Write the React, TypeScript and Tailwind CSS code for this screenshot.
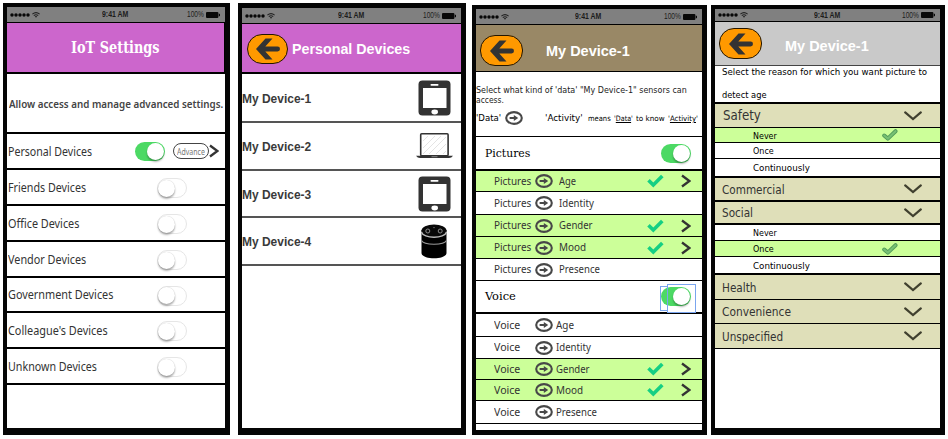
import { useLayoutEffect, useRef, useState } from 'react';
import type { ReactNode } from 'react';

const SANS = "font-['Noto_Sans',sans-serif]";
const ARIAL = "font-['Liberation_Sans',sans-serif]";
const DEJAVU = "font-['DejaVu_Sans_Condensed','DejaVu_Sans',sans-serif]";
const SERIF = "font-['DejaVu_Serif_Condensed','DejaVu_Serif',serif]";
const NARROW_SERIF = "font-['DejaVu_Serif',serif]";

/** A single line of text condensed or widened to a given width. */
function Fit({ w, className = '', children }: { w: number; className?: string; children: ReactNode }) {
  const ref = useRef<HTMLSpanElement>(null);
  const [scale, setScale] = useState(1);
  useLayoutEffect(() => {
    if (ref.current) setScale(w / ref.current.offsetWidth);
  }, [w]);
  return (
    <span className={`block shrink-0 ${className}`} style={{ width: w }}>
      <span ref={ref} className="inline-block origin-left whitespace-nowrap" style={{ transform: `scaleX(${scale})` }}>
        {children}
      </span>
    </span>
  );
}

function StatusBar({ className }: { className: string }) {
  return (
    <div className={`grid shrink-0 grid-cols-[1fr_auto_1fr] items-center border-b border-black bg-[#808080] pr-[5px] pl-[3px] text-[8.5px] leading-none text-[#1c1c1c] ${ARIAL} ${className}`}>
      <div className="flex items-center gap-[2px]">
        <svg width="20" height="4" viewBox="0 0 20 4" fill="#080808">
          <circle cx="2" cy="2" r="1.75" />
          <circle cx="6" cy="2" r="1.75" />
          <circle cx="10" cy="2" r="1.75" />
          <circle cx="14" cy="2" r="1.75" />
          <circle cx="18" cy="2" r="1.75" />
        </svg>
        <svg width="8" height="6" viewBox="0 0 8 6" fill="none" stroke="#222" strokeWidth="1.1">
          <path d="M.4 2.1Q4-.9 7.6 2.1M1.8 3.6Q4 1.8 6.2 3.6" />
          <path d="M2.8 4.3L4 5.8L5.2 4.3Q4 3.5 2.8 4.3Z" fill="#222" stroke="none" />
        </svg>
      </div>
      <Fit w={26} className="font-bold">9:41 AM</Fit>
      <div className="flex items-center justify-end gap-[2px]">
        <Fit w={17}>100%</Fit>
        <svg width="14" height="6" viewBox="0 0 14 6" fill="#080808">
          <rect width="12.4" height="6" rx="1" />
          <rect x="12.8" y="1.8" width="1.2" height="2.4" />
        </svg>
      </div>
    </div>
  );
}

function Toggle({ on }: { on?: boolean }) {
  return on ? (
    <div className="flex h-[19px] w-[30px] shrink-0 items-center justify-end rounded-full bg-[#4cd964]">
      <div className="mr-[1px] size-[17px] rounded-full bg-white shadow-[0_2px_2px_rgba(0,0,0,0.3)]" />
    </div>
  ) : (
    <div className="flex h-[20px] w-[30px] shrink-0 items-center rounded-full border border-[#e6e6e6] bg-white">
      <div className="size-[17px] rounded-full bg-white shadow-[0_2px_2px_rgba(0,0,0,0.3),0_0_1px_rgba(0,0,0,0.25)]" />
    </div>
  );
}

function BackButton({ className = '' }: { className?: string }) {
  return (
    <div className={`flex shrink-0 items-center justify-center rounded-[15px] border border-[#241600] bg-[#ff9900] ${className}`}>
      <svg width="26" height="22" viewBox="0 0 26 22" fill="#333">
        <path d="M10.500 .5H17.500L10.300 8.600H22.600A2.400 2.400 0 0 1 22.600 13.400H10.300L17.500 21.500H10.500L1 11Z" />
      </svg>
    </div>
  );
}

function ArrowRing() {
  return (
    <svg className="shrink-0" width="18" height="14" viewBox="0 0 18 14" fill="none" stroke="#484848">
      <ellipse cx="9" cy="7" rx="7.8" ry="5.9" strokeWidth="2.1" />
      <path d="M4.6 7H10.500" strokeWidth="2" />
      <path d="M8.800 4L13.200 7L8.800 10Z" fill="#484848" stroke="none" />
    </svg>
  );
}

function ChevronRight({ className = '' }: { className?: string }) {
  return (
    <svg className={`shrink-0 ${className}`} width="10" height="14" viewBox="0 0 10 14" fill="none" stroke="#333" strokeWidth="2.3">
      <path d="M1 1.5L8.4 7L1 12.5" />
    </svg>
  );
}

function ChevronDown() {
  return (
    <svg className="shrink-0" width="18" height="10" viewBox="0 0 18 10" fill="none" stroke="#40402f" strokeWidth="2.2" strokeLinecap="round">
      <path d="M1.2 1.4L9 8L16.8 1.4" />
    </svg>
  );
}

/* ---------- Settings ---------- */

const groups = [
  { name: 'Friends Devices', w: 78, h: 'h-[36px]' },
  { name: 'Office Devices', w: 71, h: 'h-[36px]' },
  { name: 'Vendor Devices', w: 78, h: 'h-[36px]' },
  { name: 'Government Devices', w: 105, h: 'h-[35px]' },
  { name: "Colleague's Devices", w: 100, h: 'h-[36px]' },
  { name: 'Unknown Devices', w: 89, h: 'h-[36px]' },
];

function SettingsPhone() {
  return (
    <section className="mt-[3px] flex h-[432px] w-[227px] shrink-0 flex-col border-t-4 border-r-5 border-b-[7px] border-l-4 border-[#050505] bg-white">
      <StatusBar className="h-4" />
      <header className={`flex h-[51px] shrink-0 items-center justify-center border-r border-b-2 border-black bg-[#cc66cc] pt-[2px] text-[16.5px] leading-none font-bold text-white ${NARROW_SERIF}`}>
        <Fit w={89}>IoT Settings</Fit>
      </header>
      <div className={`flex h-[60px] shrink-0 items-center border-b-2 border-black pt-[2px] pl-[2px] text-[11.5px] leading-none font-semibold text-[#444] ${SANS}`}>
        <Fit w={214}>Allow access and manage advanced settings.</Fit>
      </div>
      <div className={`flex h-[36px] shrink-0 items-center border-b-2 border-black pl-[1px] text-[12.5px] leading-none text-[#333] ${SANS}`}>
        <Fit w={84} className="pt-[2px]">Personal Devices</Fit>
        <div className="ml-[43px] pt-[1px]"><Toggle on /></div>
        <div className="ml-[8px] flex h-[16px] w-[36px] items-center justify-center rounded-full border-[1.5px] border-[#444] text-[9px] text-[#777]">
          <Fit w={28}>Advance</Fit>
        </div>
        <ChevronRight />
      </div>
      {groups.map((g) => (
        <div key={g.name} className={`flex shrink-0 items-center justify-between border-b-2 border-black pr-[38px] pl-[1px] text-[12.5px] leading-none text-[#333] ${SANS} ${g.h}`}>
          <Fit w={g.w} className="pt-[2px]">{g.name}</Fit>
          <div className="pt-[2px]"><Toggle /></div>
        </div>
      ))}
    </section>
  );
}

/* ---------- Personal devices ---------- */

function TabletIcon() {
  return (
    <svg width="33" height="36" viewBox="0 0 33 36">
      <rect x=".5" y=".5" width="32" height="35" rx="4" fill="#333" />
      <rect x="5" y="8" width="23.5" height="20" fill="#fff" />
      <rect x="12.5" y="4" width="8" height="1.7" rx=".8" fill="#fff" />
      <ellipse cx="16.7" cy="32" rx="3.3" ry="2.4" fill="#fff" />
    </svg>
  );
}

function LaptopIcon() {
  return (
    <svg width="37" height="26" viewBox="0 0 37 26">
      <rect x="4.7" y=".8" width="27.4" height="22" rx="1" fill="#fff" stroke="#333" strokeWidth="1.6" />
      <path d="M7 8L12 3M7 15L19 3M7 21L25 3M13 21L30 4M20 21L30 11M27 21L30 18" stroke="#ddd" strokeWidth=".8" />
      <path d="M0 22.7H37Q35.5 25 33 25H4Q1.500 25 0 22.700Z" fill="#333" />
      <rect x="15.500" y="23.200" width="6" height="1" fill="#888" />
    </svg>
  );
}

function SpeakerIcon() {
  return (
    <svg width="26" height="35" viewBox="0 0 26 35">
      <path d="M.5 6V29C.5 36 25.500 36 25.500 29V6Z" fill="#000" />
      <ellipse cx="13" cy="6.800" rx="12.500" ry="6.300" fill="#080808" />
      <path d="M.5 8C2 15 24 15 25.500 8" fill="none" stroke="#bbb" strokeWidth="1.300" />
      <path d="M.5 16.500C3 21.500 23 21.500 25.500 16.500" fill="none" stroke="#999" strokeWidth="1.100" />
      <circle cx="6.800" cy="7" r="2" fill="none" stroke="#999" strokeWidth=".9" />
      <circle cx="19.200" cy="7" r="2" fill="none" stroke="#999" strokeWidth=".9" />
      <circle cx="13" cy="3.600" r=".7" fill="#888" />
    </svg>
  );
}

const devices = [
  { name: 'My Device-1', icon: <TabletIcon />, h: 'h-[49px]', pad: 'pr-[10px]' },
  { name: 'My Device-2', icon: <LaptopIcon />, h: 'h-[48px]', pad: 'pr-[8px]' },
  { name: 'My Device-3', icon: <TabletIcon />, h: 'h-[47px]', pad: 'pr-[10px]' },
  { name: 'My Device-4', icon: <SpeakerIcon />, h: 'h-[48px]', pad: 'pr-[14px]' },
];

function DevicesPhone() {
  return (
    <section className={`mt-[3px] ml-2 flex h-[432px] w-[228px] shrink-0 flex-col border-t-5 border-r-5 border-b-[7px] border-l-4 border-[#050505] bg-white ${ARIAL}`}>
      <StatusBar className="h-4" />
      <header className="flex h-[50px] shrink-0 items-center border-b-2 border-black bg-[#cc66cc] pl-[5px] text-[15px] leading-none font-bold text-white">
        <BackButton className="mt-[2px] h-[30px] w-[41px]" />
        <Fit w={118} className="ml-[4px] pt-[1px]">Personal Devices</Fit>
      </header>
      {devices.map((d) => (
        <div key={d.name} className={`flex shrink-0 items-center justify-between border-b-2 border-[#555] text-[12.5px] leading-none font-bold text-[#3a3a3a] ${d.h} ${d.pad}`}>
          <Fit w={69} className="pt-[3px]">{d.name}</Fit>
          {d.icon}
        </div>
      ))}
    </section>
  );
}

/* ---------- Data kinds ---------- */

type Kind = { name: string; w: number; on?: boolean; h: string };

const pictureKinds: Kind[] = [
  { name: 'Age', w: 17, on: true, h: 'h-[21px]' },
  { name: 'Identity', w: 35, h: 'h-[23px]' },
  { name: 'Gender', w: 34, on: true, h: 'h-[22px]' },
  { name: 'Mood', w: 27, on: true, h: 'h-[22px]' },
  { name: 'Presence', w: 41, h: 'h-[22px]' },
];

const voiceKinds: Kind[] = [
  { name: 'Age', w: 18, h: 'h-[23px]' },
  { name: 'Identity', w: 35, h: 'h-[22px]' },
  { name: 'Gender', w: 34, on: true, h: 'h-[21px]' },
  { name: 'Mood', w: 27, on: true, h: 'h-[21px]' },
  { name: 'Presence', w: 41, h: 'h-[23px]' },
];

function KindRow({ source, sourceW, kind, gap }: { source: string; sourceW: number; kind: Kind; gap: string }) {
  return (
    <div className={`flex shrink-0 items-center border-b border-black pl-[18px] text-[11px] leading-none text-[#333] ${SANS} ${kind.h} ${kind.on ? 'bg-[#ccff99]' : 'bg-white'}`}>
      <div className="w-[41px] pb-[2px]"><Fit w={sourceW}>{source}</Fit></div>
      <ArrowRing />
      <Fit w={kind.w} className={`pb-[2px] ${gap}`}>{kind.name}</Fit>
      {kind.on && (
        <div className="ml-auto flex items-center pr-[11px]">
          <svg width="17" height="14" viewBox="0 0 17 14" fill="none" stroke="#15cf84" strokeWidth="3.6">
            <path d="M1.500 6.200L6.300 11L15.300 2" />
          </svg>
          <ChevronRight className="ml-[17px]" />
        </div>
      )}
    </div>
  );
}

function DataPhone() {
  return (
    <section className="mt-[5px] ml-[6px] flex h-[430px] w-[235px] shrink-0 flex-col border-t-4 border-r-5 border-b-5 border-l-4 border-[#050505] bg-white">
      <StatusBar className="h-4" />
      <header className={`flex h-[47px] shrink-0 items-center border-b border-black bg-[#998866] pl-[4px] text-[15px] leading-none font-bold text-white ${ARIAL}`}>
        <BackButton className="mt-[5px] h-[31px] w-[43px]" />
        <Fit w={84} className="ml-[23px] pt-[4px]">My Device-1</Fit>
      </header>
      <div className={`h-[65px] shrink-0 border-b border-black pt-[13px] text-[9px] leading-[10px] text-[#222] ${DEJAVU}`}>
        <Fit w={211}>Select what kind of 'data' "My Device-1" sensors can</Fit>
        <Fit w={28}>access.</Fit>
        <div className="mt-[6px] flex items-center text-[9.5px] text-black">
          <Fit w={25}>'Data'</Fit>
          <div className="ml-[4px]"><ArrowRing /></div>
          <Fit w={38} className="ml-[22px]">'Activity'</Fit>
          <div className="ml-[5px] flex gap-[3px] pt-[2px] text-[7.5px]">
            <Fit w={23}>means</Fit>
            <Fit w={19}>'<u>Data</u>'</Fit>
            <Fit w={29}>to know</Fit>
            <Fit w={30}>'<u>Activity</u>'</Fit>
          </div>
        </div>
      </div>
      <div className={`flex h-[34px] shrink-0 items-center justify-between border-b-2 border-black pr-[11px] pl-[9px] text-[11.5px] leading-none text-black ${SERIF}`}>
        <Fit w={45} className="pt-[2px]">Pictures</Fit>
        <Toggle on />
      </div>
      {pictureKinds.map((k) => (
        <KindRow key={k.name} source="Pictures" sourceW={37} kind={k} gap="ml-[6px]" />
      ))}
      <div className={`relative flex h-[33px] shrink-0 items-center justify-between border-b-2 border-black pr-[11px] pl-[9px] text-[11.5px] leading-none text-black ${SERIF}`}>
        <Fit w={31}>Voice</Fit>
        <Toggle on />
        <div className="absolute top-[5px] right-[34px] h-[25px] w-[8px] border border-r-0 border-[#7aa5ee]" />
        <div className="absolute top-[3px] right-[6px] h-[29px] w-[29px] border border-[#7aa5ee]" />
      </div>
      {voiceKinds.map((k) => (
        <KindRow key={k.name} source="Voice" sourceW={26} kind={k} gap="ml-[3px]" />
      ))}
    </section>
  );
}

/* ---------- Reasons ---------- */

function Category({ name, w, className }: { name: string; w: number; className: string }) {
  return (
    <div className={`flex shrink-0 items-center justify-between border-black bg-[#dfdfb9] pr-[18px] leading-none text-[#333] ${DEJAVU} ${className}`}>
      <Fit w={w} className="pt-[1px]">{name}</Fit>
      <ChevronDown />
    </div>
  );
}

function Frequency({ name, w, on, className }: { name: string; w: number; on?: boolean; className: string }) {
  return (
    <div className={`flex shrink-0 items-center justify-between border-black pr-[42px] pl-[38px] text-[8.5px] leading-none text-black ${DEJAVU} ${on ? 'bg-[#ccff99]' : 'bg-white'} ${className}`}>
      <Fit w={w} className="pt-[2px]">{name}</Fit>
      {on && (
        <svg width="16" height="12" viewBox="0 0 16 12" fill="none" strokeLinecap="round" strokeLinejoin="round">
          <path d="M2.200 6.500L5.800 9.600L13.500 2.200" stroke="#519a58" strokeWidth="4" />
          <path d="M2.200 6.500L5.800 9.600L13.500 2.200" stroke="#77c074" strokeWidth="2.200" />
        </svg>
      )}
    </div>
  );
}

function ReasonPhone() {
  return (
    <section className="mt-[5px] ml-1 flex h-[430px] w-[234px] shrink-0 flex-col border-t-4 border-r-5 border-b-[7px] border-l-4 border-[#050505] bg-white">
      <StatusBar className="h-[13px]" />
      <header className={`flex h-[44px] shrink-0 items-center border-b border-[#444] bg-[#c9c9c9] pl-[4px] text-[15px] leading-none font-bold text-white ${ARIAL}`}>
        <BackButton className="h-[31px] w-[43px]" />
        <Fit w={84} className="ml-[23px] pt-[3px]">My Device-1</Fit>
      </header>
      <div className={`flex h-[38px] shrink-0 flex-col gap-[11px] border-b-2 border-black pl-[7px] text-[9px] leading-[12px] text-black ${DEJAVU}`}>
        <Fit w={205}>Select the reason for which you want picture to</Fit>
        <Fit w={45}>detect age</Fit>
      </div>
      <Category name="Safety" w={38} className="h-[24px] border-b pl-[8px] text-[13.5px]" />
      <Frequency name="Never" w={24} on className="h-[15px] border-b" />
      <Frequency name="Once" w={21} className="h-[16px] border-b" />
      <Frequency name="Continuously" w={57} className="h-[19px] border-b-2" />
      <Category name="Commercial" w={63} className="h-[24px] border-b-2 pl-[7px] text-[12px]" />
      <Category name="Social" w={31} className="h-[23px] border-b-2 pl-[7px] text-[12px]" />
      <Frequency name="Never" w={24} className="h-[16px] border-b" />
      <Frequency name="Once" w={21} on className="h-[16px] border-b" />
      <Frequency name="Continuously" w={57} className="h-[18px] border-b-2" />
      <Category name="Health" w={34} className="h-[25px] border-b pl-[7px] text-[12px]" />
      <Category name="Convenience" w={69} className="h-[24px] border-b pl-[7px] text-[12px]" />
      <Category name="Unspecified" w={61} className="h-[25px] border-b pl-[7px] text-[12px]" />
    </section>
  );
}

export default function App() {
  return (
    <main className="flex h-[439px] w-[948px] items-start overflow-hidden bg-white pl-[3px]">
      <SettingsPhone />
      <DevicesPhone />
      <DataPhone />
      <ReasonPhone />
    </main>
  );
}
